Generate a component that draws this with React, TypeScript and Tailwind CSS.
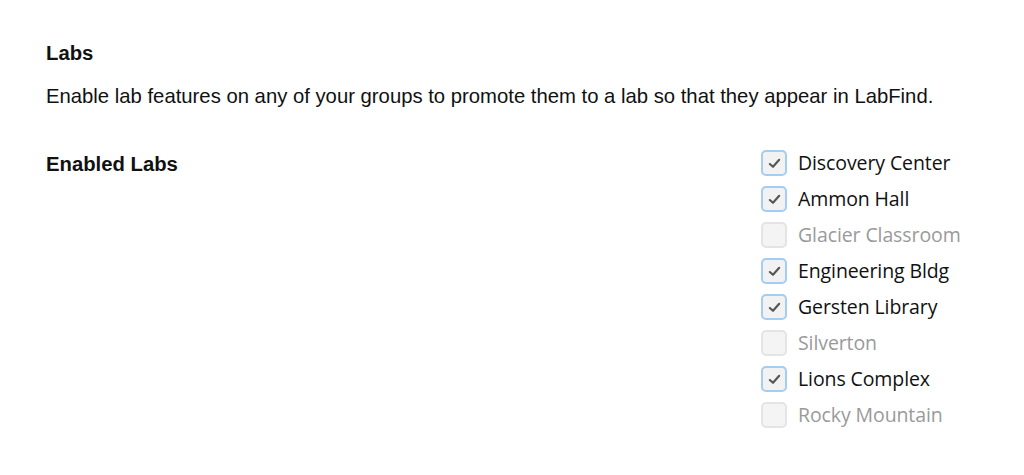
const labs = [
  { name: "Discovery Center", enabled: true },
  { name: "Ammon Hall", enabled: true },
  { name: "Glacier Classroom", enabled: false },
  { name: "Engineering Bldg", enabled: true },
  { name: "Gersten Library", enabled: true },
  { name: "Silverton", enabled: false },
  { name: "Lions Complex", enabled: true },
  { name: "Rocky Mountain", enabled: false },
];

function Box({ checked }: { checked: boolean }) {
  return (
    <div
      className={
        checked
          ? "w-[26px] h-[26px] rounded-[5px] border-2 border-[#a3cdf3] bg-[#f2f2f2] flex items-center justify-center"
          : "w-[26px] h-[26px] rounded-[5px] border-2 border-[#e4e4e4] bg-[#f4f4f4]"
      }
    >
      {checked && (
        <svg width="13" height="11" viewBox="0 0 13 11" fill="none">
          <path d="M1.8 6 L5 8.8 L11.2 1.8" stroke="#555" strokeWidth="2.1" strokeLinecap="round" strokeLinejoin="round" />
        </svg>
      )}
    </div>
  );
}

export default function App() {
  return (
    <div className="min-h-screen bg-white pl-[46px] pt-[41px] text-[#111] font-['Liberation_Sans',Arial,sans-serif]">
      {/* Header */}
      <h1 className="text-[20.3px] leading-[24px] font-bold">Labs</h1>
      <p className="mt-[19px] text-[20.3px] leading-[24px]">
        Enable lab features on any of your groups to promote them to a lab so that they appear in LabFind.
      </p>

      {/* Lab list */}
      <div className="mt-[37px] flex items-start">
        <div className="w-[715px] mt-[7px] text-[20.3px] leading-[24px] font-bold">Enabled Labs</div>
        <div className="flex flex-col">
          {labs.map((lab) => (
            <div key={lab.name} className="h-[36px] flex items-center gap-[11px]">
              <Box checked={lab.enabled} />
              <span
                className={
                  "text-[19.5px] font-['Open_Sans',sans-serif] tracking-[-0.1px] " +
                  (lab.enabled ? "text-[#111]" : "text-[#9a9a9a]")
                }
              >
                {lab.name}
              </span>
            </div>
          ))}
        </div>
      </div>
    </div>
  );
}
